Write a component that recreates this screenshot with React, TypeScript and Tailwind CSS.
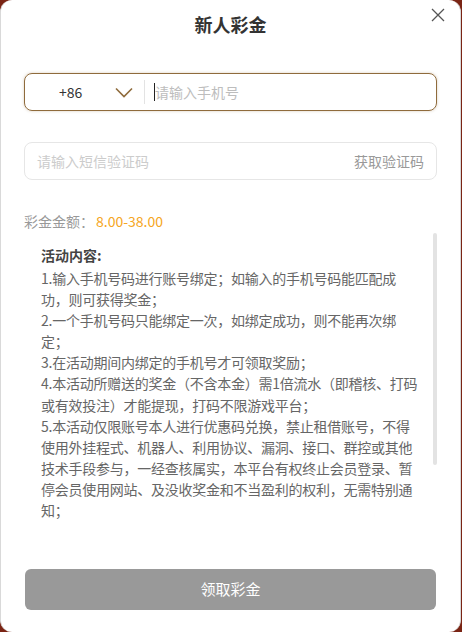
import React from "react";

const items: string[][] = [
  ["1.输入手机号码进行账号绑定；如输入的手机号码能匹配成", "功，则可获得奖金；"],
  ["2.一个手机号码只能绑定一次，如绑定成功，则不能再次绑", "定；"],
  ["3.在活动期间内绑定的手机号才可领取奖励；"],
  ["4.本活动所赠送的奖金（不含本金）需1倍流水（即稽核、打码", "或有效投注）才能提现，打码不限游戏平台；"],
  [
    "5.本活动仅限账号本人进行优惠码兑换，禁止租借账号，不得",
    "使用外挂程式、机器人、利用协议、漏洞、接口、群控或其他",
    "技术手段参与，一经查核属实，本平台有权终止会员登录、暂",
    "停会员使用网站、及没收奖金和不当盈利的权利，无需特别通",
    "知；",
  ],
];

export default function App() {
  return (
    <div
      className="w-[462px] h-[632px] bg-[#7a2414] overflow-hidden"
      style={{ fontFamily: '"Noto Sans CJK SC", "Noto Sans", sans-serif' }}
    >
      <div className="relative w-[461px] h-[632px] bg-white rounded-[12px] border-l border-r border-[#d9d9d9] flex flex-col">
        {/* close */}
        <button className="absolute right-[15px] top-[8px] w-[14px] h-[14px] flex items-center justify-center">
          <svg width="14" height="14" viewBox="0 0 14 14" fill="none" stroke="#555" strokeWidth="1.3">
            <path d="M1 1L13 13M13 1L1 13" />
          </svg>
        </button>

        <div className="h-[48px] pt-[11px] text-center text-[18px] leading-[26px] font-bold text-[#333]">
          新人彩金
        </div>

        <div className="px-[23px] pt-[25px] flex flex-col">
          {/* phone */}
          <div className="h-[38px] rounded-[8px] border border-[#8f6b3c] shadow-[0_0_3px_rgba(143,107,60,0.35)] flex items-center">
            <div className="w-[119px] flex items-center">
              <span className="ml-[34px] text-[14px] text-[#333]">+86</span>
              <svg className="ml-[33px]" width="18" height="11" viewBox="0 0 18 11" fill="none" stroke="#8f6b3c" strokeWidth="1.6">
                <path d="M1 1.5L9 9.5L17 1.5" />
              </svg>
            </div>
            <div className="w-px h-[24px] bg-[#e3e3e3]" />
            <div className="ml-[9px] w-px h-[18px] bg-[#222]" />
            <span className="text-[14px] text-[#bdbdbd]">请输入手机号</span>
          </div>

          {/* sms */}
          <div className="mt-[31px] h-[38px] rounded-[8px] border border-[#e6e6e6] flex items-center justify-between pl-[12px] pr-[12px]">
            <span className="text-[14px] text-[#cccccc]">请输入短信验证码</span>
            <span className="text-[14px] text-[#999]">获取验证码</span>
          </div>

          {/* amount */}
          <div className="mt-[31px] flex items-center leading-[20px]">
            <span className="text-[#999] text-[14px]">彩金金额：</span>
            <span className="ml-[2px] text-[#f5a623] text-[14px]">8.00-38.00</span>
          </div>

          {/* content */}
          <div className="relative mt-[1px] h-[320px] overflow-hidden">
            <div className="absolute right-[0px] top-[1px] w-[4px] h-[232px] rounded-[2px] bg-[#e3e3e3]" />
            <div className="pl-[17px] pt-[13px]">
              <div className="text-[14px] leading-[20px] font-bold text-[#444] mb-[3px]">活动内容:</div>
              {items.map((it, i) => (
                <div key={i} className="text-[14px] leading-[21.1px] text-[#666] tracking-[-0.25px]">
                  {it.map((l, j) => (
                    <div key={j} className="whitespace-nowrap">
                      {l}
                    </div>
                  ))}
                </div>
              ))}
            </div>
          </div>
        </div>

        <div className="mt-auto px-[24px] pb-[22px]">
          <button className="w-full h-[41px] rounded-[6px] bg-[#999999] text-white text-[15px]">领取彩金</button>
        </div>
      </div>
    </div>
  );
}
